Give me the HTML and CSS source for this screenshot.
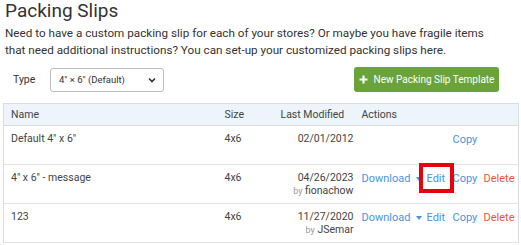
FILE: index.html
```html
<!DOCTYPE html>
<html lang="en">
<head>
<meta charset="utf-8">
<title>Packing Slips</title>
<link rel="stylesheet" href="styles.css">
</head>
<body>
<h1 class="title">Packing Slips</h1>
<p class="intro">Need to have a custom packing slip for each of your stores? Or maybe you have fragile items that need additional instructions? You can set-up your customized packing slips here.</p>
<div class="toolbar">
  <label class="type-label">Type</label>
  <div class="select">
    <span>4" × 6" (Default)</span>
    <svg class="chev" width="8" height="6" viewBox="0 0 8 6"><path d="M1 1.5 L4 4.5 L7 1.5" fill="none" stroke="#333" stroke-width="1.6"/></svg>
  </div>
  <div class="spacer"></div>
  <button class="btn-new"><svg width="9" height="9" viewBox="0 0 9 9"><path d="M4.5 0.5v8M0.5 4.5h8" stroke="#fff" stroke-width="2.2"/></svg><span>New Packing Slip Template</span></button>
</div>
<table class="slips">
  <thead>
    <tr><th class="c-name">Name</th><th class="c-size">Size</th><th class="c-mod">Last Modified</th><th class="c-act">Actions</th></tr>
  </thead>
  <tbody>
    <tr>
      <td class="c-name">Default 4" x 6"</td>
      <td class="c-size">4x6</td>
      <td class="c-mod"><div>02/01/2012</div></td>
      <td class="c-act"><div class="acts"><span></span><span></span><a class="lnk">Copy</a><span></span></div></td>
    </tr>
    <tr>
      <td class="c-name">4" x 6" - message</td>
      <td class="c-size">4x6</td>
      <td class="c-mod"><div>04/26/2023</div><div class="by"><small>by</small> fionachow</div></td>
      <td class="c-act"><div class="acts"><a class="lnk dl">Download <i class="caret"></i></a><a class="lnk marked">Edit</a><a class="lnk">Copy</a><a class="lnk del">Delete</a></div></td>
    </tr>
    <tr>
      <td class="c-name">123</td>
      <td class="c-size">4x6</td>
      <td class="c-mod"><div>11/27/2020</div><div class="by"><small>by</small> JSemar</div></td>
      <td class="c-act"><div class="acts"><a class="lnk dl">Download <i class="caret"></i></a><a class="lnk">Edit</a><a class="lnk">Copy</a><a class="lnk del">Delete</a></div></td>
    </tr>
  </tbody>
</table>
</body>
</html>
```
FILE: styles.css
```css
* { box-sizing: border-box; }
html, body { margin: 0; padding: 0; background: #fff; }
body {
  font-family: Roboto, "Liberation Sans", sans-serif;
  color: #333;
  padding: 0 3px;
  overflow: hidden;
}
.title {
  margin: 0;
  padding: 0 0 0 2px;
  font-size: 19px;
  font-weight: 400;
  line-height: 22px;
  color: #333;
}
.intro {
  margin: 3px 0 0;
  padding-left: 2px;
  font-size: 11.7px;
  line-height: 17px;
  color: #333;
  max-width: 500px;
}
.toolbar {
  display: flex;
  align-items: center;
  margin-top: 8px;
  padding-left: 10px;
  height: 25px;
}
.type-label {
  font-size: 10.5px;
  color: #333;
  width: 37px;
}
.select {
  width: 114px;
  height: 24px;
  border: 1px solid #bdbdbd;
  border-radius: 3px;
  display: flex;
  align-items: center;
  justify-content: space-between;
  padding: 0 7px 0 8px;
  font-size: 9.5px;
  color: #333;
}
.spacer { flex: 1; }
.btn-new {
  margin-right: 19px;
  height: 25px;
  width: 145px;
  border: none;
  border-radius: 3px;
  background: #69a33a;
  color: #fff;
  font-family: inherit;
  font-size: 10px;
  display: flex;
  align-items: center;
  justify-content: center;
  gap: 6px;
  padding: 0;
}
.slips {
  margin-top: 11px;
  width: 516px;
  border-collapse: collapse;
  border: 1px solid #dcdcdc;
  font-size: 10.5px;
  color: #444;
  table-layout: fixed;
}
.slips th {
  background: #edf4fb;
  font-weight: 400;
  text-align: left;
  height: 22px;
  padding: 0;
  border-bottom: 1px solid #dcdcdc;
  color: #444;
}
.slips td {
  height: 39px;
  vertical-align: top;
  padding: 6px 0 0;
  border-bottom: 1px solid #e3e3e3;
  line-height: 13px;
}
.c-name { width: 214px; padding-left: 7px !important; }
.c-size { width: 56px; padding-left: 7px !important; }
.c-mod { width: 81px; }
th.c-mod { padding-left: 7px !important; }
td.c-mod { text-align: right; padding-right: 1px !important; }
.c-act { padding-left: 7px !important; }
.by { color: #444; }
.by small { font-size: 9px; color: #999; }
.acts {
  display: grid;
  grid-template-columns: 65px 26px 31px auto;
  align-items: start;
  padding-top: 1px;
}
.lnk { color: #4a94de; text-decoration: none; font-size: 11px; }
.del { color: #f2533d; }
.caret {
  display: inline-block;
  width: 0; height: 0;
  border-left: 3.5px solid transparent;
  border-right: 3.5px solid transparent;
  border-top: 4px solid #4a94de;
  vertical-align: middle;
  margin-left: 3px;
}
.marked {
  position: relative;
  justify-self: start;
}
.marked::after {
  content: "";
  position: absolute;
  left: -8px;
  right: -9px;
  top: -9px;
  bottom: -8px;
  border: 4px solid #e8000f;
}
```
